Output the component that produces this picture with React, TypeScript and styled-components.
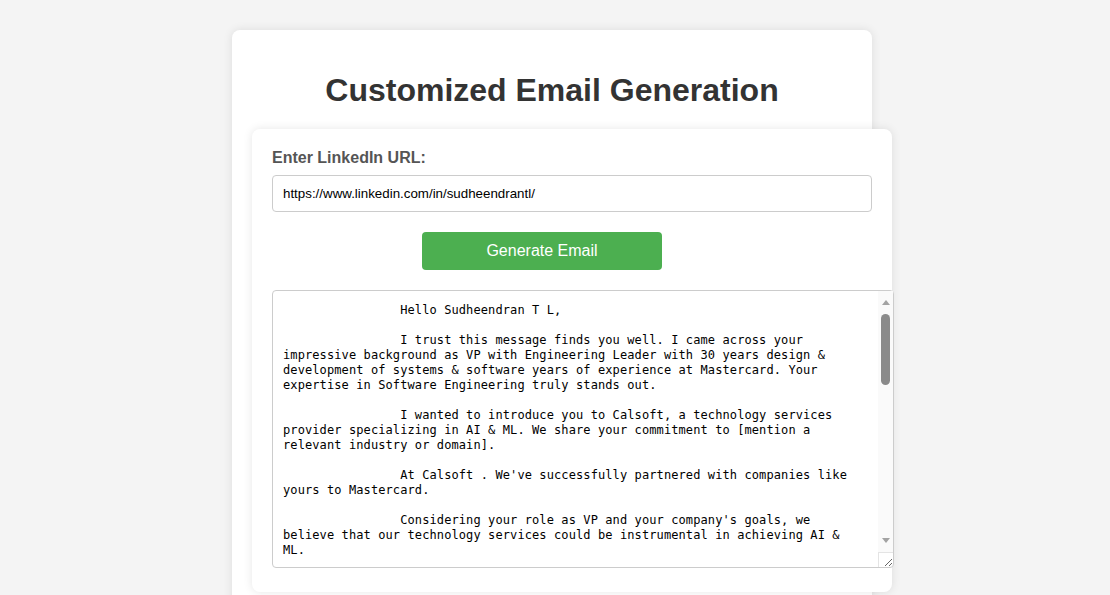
import React, { useEffect, useRef } from "react";
import styled, { createGlobalStyle } from "styled-components";

const GlobalStyle = createGlobalStyle`
  html, body {
    margin: 0;
    padding: 0;
    background: #f4f4f4;
    overflow: hidden;
    font-family: "Liberation Sans", Arial, sans-serif;
  }
`;

const Page = styled.div`
  display: flex;
  justify-content: center;
  padding: 30px 6px 0 0;
`;

const Container = styled.div`
  width: 600px;
  padding: 20px;
  background: #ffffff;
  border-radius: 8px;
  box-shadow: 0 0 10px rgba(0, 0, 0, 0.1);
`;

const Title = styled.h1`
  margin: 22.4px 0 19.4px;
  font-size: 32px;
  font-weight: bold;
  color: #333333;
  text-align: center;
`;

const FormCard = styled.div`
  width: 100%;
  padding: 20px;
  background: #ffffff;
  border-radius: 8px;
  box-shadow: 0 0 10px rgba(0, 0, 0, 0.1);
`;

const Label = styled.label`
  display: block;
  margin-bottom: 8px;
  font-size: 16px;
  font-weight: bold;
  color: #555555;
`;

const UrlInput = styled.input`
  display: block;
  box-sizing: border-box;
  width: 100%;
  margin: 0;
  padding: 10px;
  border: 1px solid #cccccc;
  border-radius: 4px;
  font-family: "Liberation Sans", Arial, sans-serif;
  font-size: 13.333px;
  color: #000000;
  caret-color: #000000;
  outline: none;
`;

const ButtonRow = styled.div`
  display: flex;
  margin: 20px 0;
  padding-left: 150px;
`;

const GenerateButton = styled.button`
  width: 240px;
  height: 38px;
  padding: 0;
  border: none;
  border-radius: 4px;
  background: #4caf50;
  color: #ffffff;
  font-family: "Liberation Sans", Arial, sans-serif;
  font-size: 16px;
  cursor: pointer;
`;

const EmailBox = styled.div`
  position: relative;
  width: fit-content;
  margin-bottom: 4px;
`;

const EmailArea = styled.textarea`
  display: block;
  width: 600px;
  height: 256px;
  margin: 0;
  padding: 12px 10px 8px;
  border: 1px solid #cccccc;
  border-radius: 4px;
  font-family: "DejaVu Sans Mono", "Liberation Mono", monospace;
  font-size: 12px;
  letter-spacing: 0.1px;
  line-height: 15px;
  color: #000000;
  background: #ffffff;
  white-space: pre;
  overflow: hidden;
`;

const ScrollTrack = styled.div`
  position: absolute;
  top: 1px;
  right: 1px;
  bottom: 16px;
  width: 15px;
  display: flex;
  flex-direction: column;
  background: #fafafa;
`;

const ScrollButton = styled.div`
  height: 23px;
  flex: none;
  display: flex;
  align-items: center;
  justify-content: center;
`;

const Arrow = styled.span<{ $down?: boolean }>`
  width: 0;
  height: 0;
  border-left: 4.5px solid transparent;
  border-right: 4.5px solid transparent;
  ${(p) =>
    p.$down
      ? "border-top: 5px solid #a3a3a3;"
      : "border-bottom: 5px solid #a3a3a3;"}
`;

const ThumbLane = styled.div`
  flex: 1;
  display: flex;
  flex-direction: column;
  padding: 0 3px;
`;

const Thumb = styled.div`
  height: 71px;
  border-radius: 5px;
  background: #8a8a8a;
`;

const Corner = styled.div`
  position: absolute;
  right: 1px;
  bottom: 1px;
  width: 14px;
  height: 14px;
  border-top: 1px solid #e4e4e4;
  border-left: 1px solid #e4e4e4;
  pointer-events: none;
`;

const pad = "                ";

const emailLines = [
  `${pad}Hello Sudheendran T L,`,
  ``,
  `${pad}I trust this message finds you well. I came across your`,
  `impressive background as VP with Engineering Leader with 30 years design &`,
  `development of systems & software years of experience at Mastercard. Your`,
  `expertise in Software Engineering truly stands out.`,
  ``,
  `${pad}I wanted to introduce you to Calsoft, a technology services`,
  `provider specializing in AI & ML. We share your commitment to [mention a`,
  `relevant industry or domain].`,
  ``,
  `${pad}At Calsoft . We've successfully partnered with companies like`,
  `yours to Mastercard.`,
  ``,
  `${pad}Considering your role as VP and your company's goals, we`,
  `believe that our technology services could be instrumental in achieving AI &`,
  `ML.`,
  ``,
  `${pad}I would welcome the opportunity to discuss how Calsoft can`,
  `support Mastercard's engineering initiatives and help accelerate your`,
  `AI & ML roadmap.`,
  ``,
  `${pad}Would you be available for a brief call next week? Please let`,
  `me know a time that works best for you.`,
  ``,
  `${pad}Thank you for your time and consideration.`,
  ``,
  `${pad}Best regards,`,
  ``,
  `${pad}[Your Name]`,
  `${pad}[Your Position]`,
  `${pad}Calsoft`,
  `${pad}[Your Contact Information]`,
];

const url = "https://www.linkedin.com/in/sudheendrantl/";

export default function App() {
  const inputRef = useRef<HTMLInputElement>(null);

  useEffect(() => {
    const el = inputRef.current;
    if (el) {
      el.focus();
      el.setSelectionRange(url.length, url.length);
    }
  }, []);

  return (
    <>
      <GlobalStyle />
      <Page>
        <Container>
          <Title>Customized Email Generation</Title>
          <FormCard>
            <Label htmlFor="linkedin">Enter LinkedIn URL:</Label>
            <UrlInput ref={inputRef} id="linkedin" type="text" defaultValue={url} />
            <ButtonRow>
              <GenerateButton type="button">Generate Email</GenerateButton>
            </ButtonRow>
            <EmailBox>
              <EmailArea readOnly defaultValue={emailLines.join("\n")} />
              <ScrollTrack>
                <ScrollButton>
                  <Arrow />
                </ScrollButton>
                <ThumbLane>
                  <Thumb />
                </ThumbLane>
                <ScrollButton>
                  <Arrow $down />
                </ScrollButton>
              </ScrollTrack>
              <Corner />
            </EmailBox>
          </FormCard>
        </Container>
      </Page>
    </>
  );
}
